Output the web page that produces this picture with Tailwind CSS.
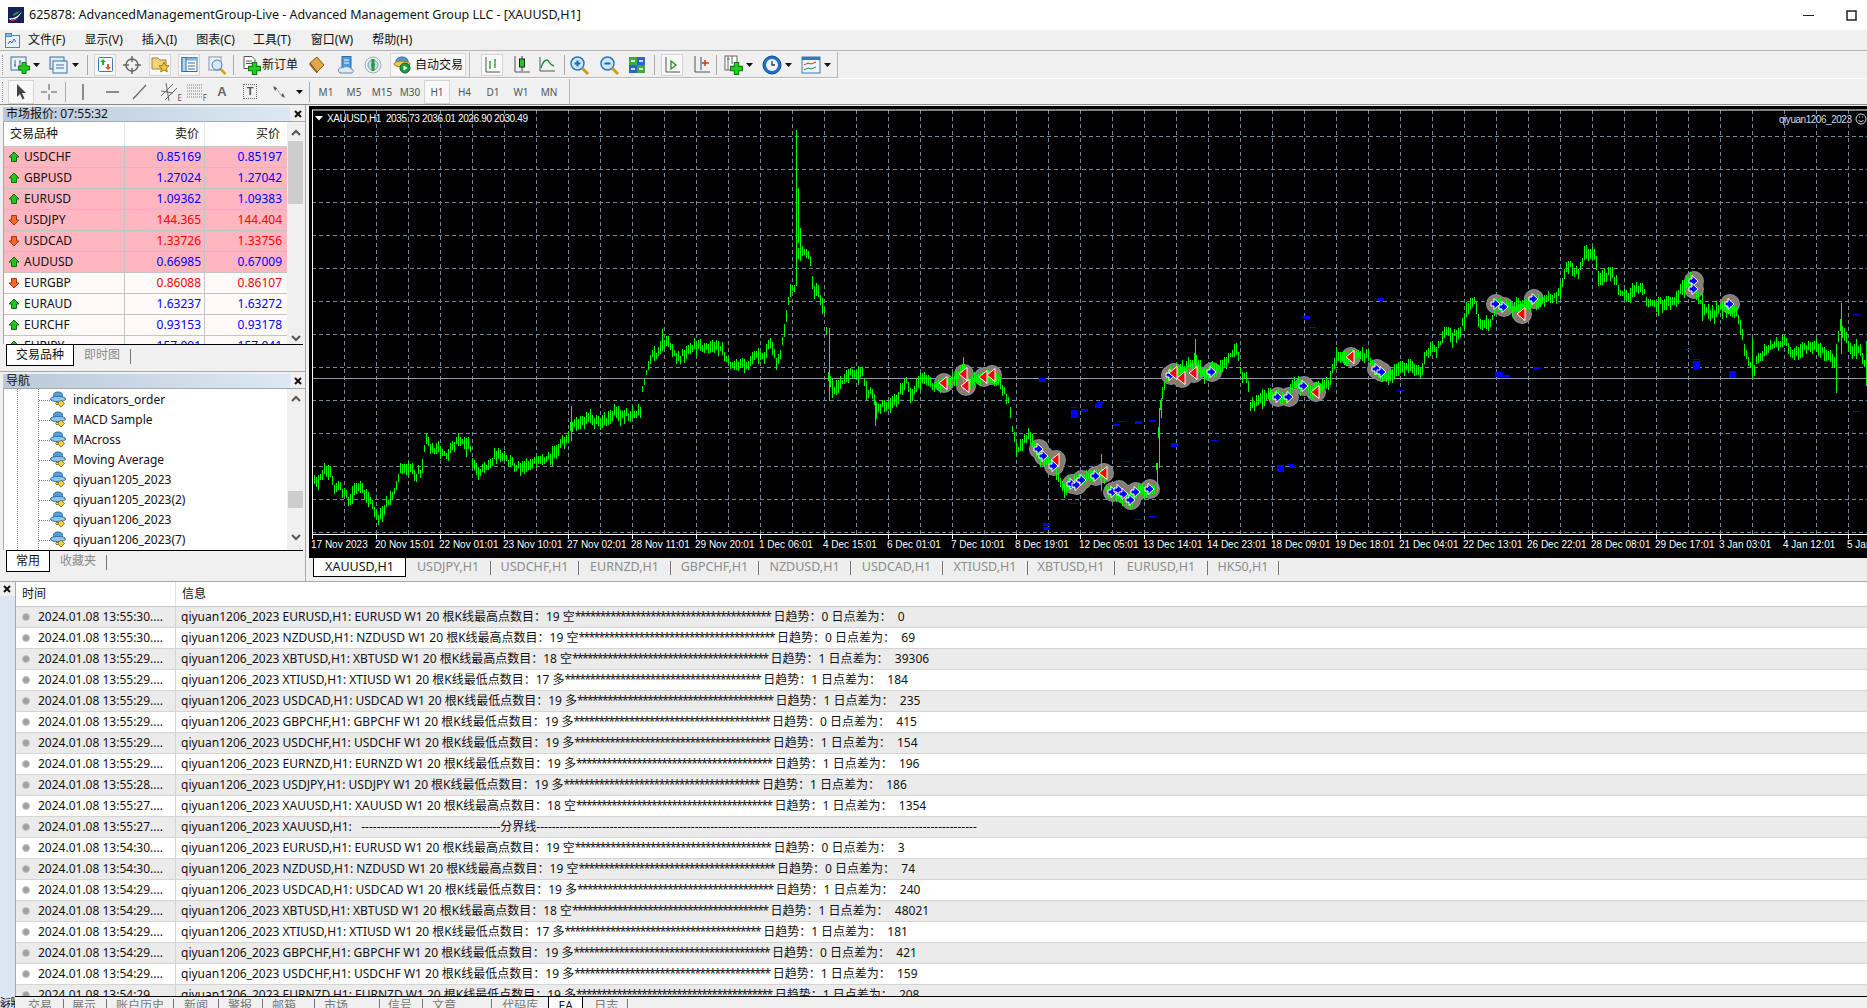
<!DOCTYPE html>
<html lang="zh-CN">
<head>
<meta charset="utf-8"/>
<title>625878: AdvancedManagementGroup-Live</title>
<script src="https://cdn.jsdelivr.net/npm/@tailwindcss/browser@4"></script>
</head>
<body class="m-0 overflow-hidden bg-white">

<!-- shared icons -->
<svg class="absolute w-0 h-0">
  <symbol id="dd" viewBox="0 0 10 10"><path d="M1 3h7L4.500 7z" fill="#111"/></symbol>
  <symbol id="plus" viewBox="0 0 12 12"><path d="M4 .5h4v3.500h3.500v4H8v3.500H4V8H.5V4H4z" fill="#1fd01f" stroke="#0c7a0c"/></symbol>
  <symbol id="hat" viewBox="0 0 18 18">
    <ellipse cx="8" cy="4.500" rx="4.500" ry="3.500" fill="#5aa0d8" stroke="#2c6ea8"/>
    <ellipse cx="8" cy="8" rx="7.500" ry="2.700" fill="#8cc4ec" stroke="#2c6ea8"/>
    <path d="M11 9l3.500 3.500L11 16l-3.500-3.500z" fill="#f3d24a" stroke="#8b7a20"/>
    <path d="M7 11l1.500 1.500L7 14l-1.500-1.500z" fill="#f3d24a" stroke="#8b7a20"/>
  </symbol>
  <symbol id="up" viewBox="0 0 12 12"><path d="M6 1l5 5H8.500v4.500h-5V6H1z" fill="#1fc41f" stroke="#0d6d0d"/></symbol>
  <symbol id="down" viewBox="0 0 12 12"><path d="M6 11L1 6h2.500V1.500h5V6H11z" fill="#f4682c" stroke="#9c3a10"/></symbol>
  <symbol id="chevup" viewBox="0 0 10 8"><path d="M1 6l4-4 4 4" fill="none" stroke="#555" stroke-width="2"/></symbol>
  <symbol id="chevdown" viewBox="0 0 10 8"><path d="M1 2l4 4 4-4" fill="none" stroke="#555" stroke-width="2"/></symbol>
  <symbol id="close" viewBox="0 0 8 8"><path d="M1 1l6 6M7 1L1 7" fill="none" stroke="#111" stroke-width="2"/></symbol>
</svg>

<div class="w-[1867px] h-[1008px] flex flex-col overflow-hidden text-[12px] leading-none text-[#111] font-['Noto_Sans','Noto_Sans_CJK_SC',sans-serif]">

  <!-- title bar -->
  <div class="h-[30px] flex items-center bg-white shrink-0">
    <svg class="ml-[8px] w-[16px] h-[16px]" viewBox="0 0 16 16"><rect width="16" height="16" fill="#16205a"/><path d="M1 11c4 1 9-1 13-7-2 5-6 9-12 9z" fill="#fff"/><path d="M4 9c2-3 5-4 8-5-2 2-4 4-8 5z" fill="#27b34a"/><path d="M3 12c3 1 6 0 8-2-2 3-5 4-8 4z" fill="#e23a3a"/></svg>
    <span class="ml-[5px] text-[12.500px] whitespace-pre">625878: AdvancedManagementGroup-Live - Advanced Management Group LLC - [XAUUSD,H1]</span>
    <svg class="ml-auto w-[11px] h-[11px]" viewBox="0 0 11 11"><path d="M0 5.500h11" stroke="#222"/></svg>
    <svg class="ml-[32px] mr-[10px] w-[11px] h-[11px]" viewBox="0 0 11 11"><rect x="1" y="1" width="9" height="9" fill="none" stroke="#222" stroke-width="1.500"/></svg>
  </div>

  <!-- menu -->
  <div class="h-[20px] flex items-center bg-[#f0f0f0] border-b border-[#b4b4b4] shrink-0 box-content">
    <svg class="ml-[5px] w-[15px] h-[15px]" viewBox="0 0 15 15"><rect x=".5" y="2.500" width="14" height="12" fill="#e8f1fa" stroke="#4a86c0"/><rect x=".5" y=".5" width="6" height="3" fill="#8ab8e0" stroke="#4a86c0"/><path d="M3 11l2-3 2 2 2-4 2 3" fill="none" stroke="#3a6ea5"/></svg>
    <span class="ml-[8px]">文件(F)</span>
    <span class="ml-[19px]">显示(V)</span>
    <span class="ml-[19px]">插入(I)</span>
    <span class="ml-[19px]">图表(C)</span>
    <span class="ml-[18px]">工具(T)</span>
    <span class="ml-[20px]">窗口(W)</span>
    <span class="ml-[19px]">帮助(H)</span>
  </div>

  <!-- main toolbar -->
  <div class="h-[27px] flex items-end bg-[#f0f0f0] shrink-0">
    <div class="h-[26px] flex items-center border-b border-r border-[#b8b8b8] w-[470px] shrink-0">
      <i class="ml-[2px] mr-[5px] h-[20px] border-l border-dotted border-[#999]"></i>
      <svg class="w-[24px] h-[20px]" viewBox="0 0 24 20"><rect x="3" y="2" width="15" height="13" fill="#eaf3fb" stroke="#3f6f9f"/><path d="M7 5v7M6 10h2M12 5v7M11 7h2" stroke="#3f6f9f"/><use href="#plus" x="10" y="7" width="12" height="12"/></svg>
      <svg class="w-[10px] h-[10px]"><use href="#dd"/></svg>
      <svg class="ml-[4px] w-[24px] h-[20px]" viewBox="0 0 24 20"><rect x="4" y="2" width="14" height="12" fill="#dce9f6" stroke="#3f6f9f"/><rect x="7" y="6" width="14" height="12" fill="#eaf3fb" stroke="#3f6f9f"/><path d="M10 10h8M10 13h8" stroke="#3f6f9f"/></svg>
      <svg class="ml-[1px] w-[10px] h-[10px]"><use href="#dd"/></svg>
      <i class="ml-[6px] w-px h-[20px] bg-[#a8a8a8]"></i>
      <span class="ml-[6px] w-[22px] h-[22px] flex items-center justify-center border border-[#d4d4d4] bg-[#f8f8f8]"><svg class="w-[17px] h-[17px]" viewBox="0 0 17 17"><rect x="1.500" y="1.500" width="14" height="14" rx="1" fill="#fff" stroke="#3a7ab8"/><path d="M6 3l3 3H7v3H5V6H3z" fill="#22b022"/><path d="M11 14l-3-3h2V8h2v3h2z" fill="#e8502a"/></svg></span>
      <svg class="ml-[4px] w-[24px] h-[20px]" viewBox="0 0 24 20"><circle cx="12" cy="10" r="6" fill="none" stroke="#666" stroke-width="1.500"/><path d="M12 1v6M12 13v6M3 10h6M15 10h6" stroke="#666" stroke-width="1.500"/></svg>
      <span class="ml-[5px] w-[22px] h-[22px] flex items-center justify-center border border-[#d4d4d4] bg-[#f8f8f8]"><svg class="w-[19px] h-[19px]" viewBox="0 0 19 19"><path d="M1 3h6l2 2h6v9H1z" fill="#f2d578" stroke="#a08530"/><path d="M13 7l1.600 3.500 3.400.4-2.500 2.300.7 3.600-3.200-1.800-3.200 1.800.7-3.600L8 10.900l3.400-.4z" fill="#f6c630" stroke="#a07a10"/></svg></span>
      <span class="ml-[7px] w-[22px] h-[22px] flex items-center justify-center border border-[#d4d4d4] bg-[#f8f8f8]"><svg class="w-[17px] h-[17px]" viewBox="0 0 17 17"><rect x="1" y="1.500" width="15" height="14" fill="#fff" stroke="#2e6da8"/><rect x="1" y="1.500" width="15" height="3" fill="#7fb0dc"/><rect x="1" y="1.500" width="4" height="14" fill="#bcd6ee" stroke="#2e6da8"/><path d="M7 7h7M7 10h7M7 13h7" stroke="#2e6da8"/></svg></span>
      <svg class="ml-[6px] w-[22px] h-[22px]" viewBox="0 0 22 22"><rect x="3" y="3" width="12" height="13" fill="#f4f8fc" stroke="#7a90a8"/><circle cx="11" cy="11" r="5" fill="#d6e8f6" stroke="#3f7ab0"/><path d="M14.500 15l5 5" stroke="#d0a020" stroke-width="2.500"/></svg>
      <i class="ml-[5px] w-px h-[20px] bg-[#a8a8a8]"></i>
      <svg class="ml-[7px] w-[20px] h-[20px]" viewBox="0 0 20 20"><path d="M3 1.500h8l3 3v9H3z" fill="#fff" stroke="#555"/><path d="M5 6h6M5 8.500h6" stroke="#555"/><use href="#plus" x="7" y="7" width="13" height="13"/></svg>
      <span class="ml-px w-[36px] whitespace-nowrap">新订单</span>
      <svg class="ml-[8px] w-[22px] h-[20px]" viewBox="0 0 22 20"><path d="M4 8l7-6 7 8-7 7z" fill="#e0a848" stroke="#8a5c18"/><path d="M4 8l7 9v1L4 10z" fill="#a87420" stroke="#8a5c18"/></svg>
      <svg class="ml-[7px] w-[22px] h-[20px]" viewBox="0 0 22 20"><rect x="7" y="1.500" width="9" height="11" fill="#4a9ae0" stroke="#2a6ca8"/><path d="M9 5h5M9 8h5" stroke="#fff"/><path d="M4 17c-2-3 1-5 3-4 2-2 8-2 9 1 3 0 3 4 0 4H5z" fill="#dde8f2" stroke="#6a86a0"/></svg>
      <svg class="ml-[5px] w-[22px] h-[20px]" viewBox="0 0 22 20"><circle cx="11" cy="10" r="8" fill="#e8eef2" stroke="#9ab0bc"/><circle cx="11" cy="10" r="5" fill="#c6dce6" stroke="#7ea0b0"/><path d="M11 4v12" stroke="#2c9a48" stroke-width="3"/><circle cx="11" cy="10" r="2" fill="#2c9a48"/></svg>
      <span class="ml-[6px] w-[76px] h-[24px] flex items-center border border-[#d8d8d8] bg-[#f8f8f8]">
        <svg class="ml-[2px] w-[20px] h-[20px]" viewBox="0 0 20 20"><ellipse cx="9" cy="6" rx="6" ry="4" fill="#4f9ad8" stroke="#2a6ca8"/><ellipse cx="9" cy="9" rx="8" ry="3" fill="#f2c84a" stroke="#9a7a18"/><circle cx="12" cy="13" r="5" fill="#1c9c3c" stroke="#0c6a24"/><path d="M10.500 10.500l4 2.500-4 2.500z" fill="#fff"/></svg>
        <span class="ml-[2px] whitespace-nowrap">自动交易</span>
      </span>
    </div>
    <div class="h-[26px] flex items-center border-b border-r border-[#b8b8b8] w-[368px] shrink-0 pl-[11px]">
      <span class="w-[22px] h-[22px] flex items-center justify-center border border-[#d4d4d4] bg-[#f8f8f8]"><svg class="w-[18px] h-[18px]" viewBox="0 0 18 18"><path d="M3 1v15h14" fill="none" stroke="#555"/><path d="M7 5v8M6 11h1M7 6h1M12 3v9M11 9h1M12 4h1" stroke="#1a9a1a" stroke-width="1.200"/></svg></span>
      <svg class="ml-[7px] w-[22px] h-[22px]" viewBox="0 0 22 22"><path d="M5 2v16h15" fill="none" stroke="#555"/><path d="M12 2v15" stroke="#333"/><rect x="9.500" y="5" width="5" height="8" fill="#2cc02c" stroke="#222"/></svg>
      <svg class="ml-[4px] w-[22px] h-[22px]" viewBox="0 0 22 22"><path d="M4 3v14h15" fill="none" stroke="#555"/><path d="M5 14c2-7 4-8 6-8s2 5 7 6" fill="none" stroke="#1a8a3a" stroke-width="1.300"/></svg>
      <i class="ml-[6px] w-px h-[20px] bg-[#a8a8a8]"></i>
      <svg class="ml-[3px] w-[22px] h-[22px]" viewBox="0 0 22 22"><circle cx="9.500" cy="9.500" r="6.500" fill="#cfe6f8" stroke="#2a78b8" stroke-width="1.500"/><path d="M6.500 9.500h6M9.500 6.500v6" stroke="#1a6aa8" stroke-width="2"/><path d="M14 14l6 6" stroke="#d09a20" stroke-width="3"/></svg>
      <svg class="ml-[8px] w-[22px] h-[22px]" viewBox="0 0 22 22"><circle cx="9.500" cy="9.500" r="6.500" fill="#cfe6f8" stroke="#2a78b8" stroke-width="1.500"/><path d="M6.500 9.500h6" stroke="#1a6aa8" stroke-width="2"/><path d="M14 14l6 6" stroke="#d09a20" stroke-width="3"/></svg>
      <svg class="ml-[6px] w-[22px] h-[22px]" viewBox="0 0 22 22"><rect x="3" y="3" width="8" height="8" fill="#3fa83f"/><rect x="11" y="3" width="8" height="8" fill="#2f62c8"/><rect x="3" y="11" width="8" height="8" fill="#2f62c8"/><rect x="11" y="11" width="8" height="8" fill="#3fa83f"/><path d="M5 7h4M13 7h4M5 15h4M13 15h4" stroke="#fff" stroke-width="1.500"/></svg>
      <i class="ml-[6px] w-px h-[20px] bg-[#a8a8a8]"></i>
      <span class="ml-[6px] w-[22px] h-[22px] flex items-center justify-center border border-[#d4d4d4] bg-[#f8f8f8]"><svg class="w-[18px] h-[18px]" viewBox="0 0 18 18"><path d="M3 1v15h14" fill="none" stroke="#555"/><path d="M8 5l5 4-5 4z" fill="none" stroke="#1a9a1a" stroke-width="1.300"/></svg></span>
      <svg class="ml-[6px] w-[22px] h-[22px]" viewBox="0 0 22 22"><path d="M6 2v16h15" fill="none" stroke="#555"/><path d="M12 3v13" stroke="#2a4a8a"/><path d="M13 9h7M16 6v6" stroke="#c83a10" stroke-width="1.500"/></svg>
      <i class="ml-[5px] w-px h-[20px] bg-[#a8a8a8]"></i>
      <svg class="ml-[5px] w-[22px] h-[22px]" viewBox="0 0 22 22"><rect x="3" y="2" width="12" height="14" fill="#fff" stroke="#666"/><path d="M6 2v14M5 5h3M10 2v8" stroke="#666"/><use href="#plus" x="8" y="8" width="13" height="13"/></svg>
      <svg class="ml-px w-[10px] h-[10px]"><use href="#dd"/></svg>
      <svg class="ml-[6px] w-[22px] h-[22px]" viewBox="0 0 22 22"><circle cx="11" cy="11" r="9" fill="#1c72c8" stroke="#0e4a90"/><circle cx="11" cy="11" r="6" fill="#eef4fa"/><path d="M11 7v4h3" fill="none" stroke="#333" stroke-width="1.300"/></svg>
      <svg class="ml-px w-[10px] h-[10px]"><use href="#dd"/></svg>
      <svg class="ml-[6px] w-[22px] h-[22px]" viewBox="0 0 22 22"><rect x="2" y="3" width="18" height="16" fill="#eef4fa" stroke="#3a78b0"/><rect x="2" y="3" width="18" height="3" fill="#3a78b0"/><path d="M4 11l4-2 3 1 5-2" fill="none" stroke="#c03a1a"/><path d="M4 16l4-2 3 1 5-2" fill="none" stroke="#1a9a3a"/></svg>
      <svg class="ml-px w-[10px] h-[10px]"><use href="#dd"/></svg>
    </div>
  </div>

  <!-- drawing and period toolbar -->
  <div class="h-[26px] mt-px flex items-center bg-[#f0f0f0] border-b border-[#8a8a8a] shrink-0">
    <div class="h-[25px] flex items-center w-[570px] shrink-0 border-r border-[#b8b8b8] text-[#555]">
      <i class="ml-[2px] mr-[5px] h-[20px] border-l border-dotted border-[#999]"></i>
      <span class="w-[26px] h-[24px] flex items-center justify-center border border-[#d4d4d4] bg-[#f8f8f8]"><svg class="w-[14px] h-[18px]" viewBox="0 0 14 18"><path d="M3 1v13l3-3 2.500 5.500 2-1L8 10h4z" fill="#444"/></svg></span>
      <svg class="ml-[2px] w-[26px] h-[20px]" viewBox="0 0 26 20"><path d="M13 2v6M13 12v6M5 10h6M15 10h6" stroke="#555"/></svg>
      <i class="ml-[3px] w-px h-[20px] bg-[#a8a8a8]"></i>
      <svg class="ml-[4px] w-[26px] h-[20px]" viewBox="0 0 26 20"><path d="M13 2v16" stroke="#555" stroke-width="1.300"/></svg>
      <svg class="ml-[3px] w-[26px] h-[20px]" viewBox="0 0 26 20"><path d="M7 10h13" stroke="#555" stroke-width="1.300"/></svg>
      <svg class="ml-px w-[26px] h-[20px]" viewBox="0 0 26 20"><path d="M7 17L20 3" stroke="#666" stroke-width="1.200"/></svg>
      <span class="ml-[4px] relative w-[26px] h-[20px]"><svg class="w-[26px] h-[20px]" viewBox="0 0 26 20"><path d="M5 14L17 2M9 18L21 6M10 1l3 18M5 9l12 2" stroke="#666"/></svg><b class="absolute right-0 bottom-0 text-[8px] font-normal">E</b></span>
      <span class="relative w-[26px] h-[20px]"><svg class="w-[26px] h-[20px]" viewBox="0 0 26 20"><path d="M5 3h15M5 6h15M5 9h15M5 12h15M5 15h15" stroke="#777" stroke-dasharray="1 1"/></svg><b class="absolute right-[1px] bottom-0 text-[8px] font-normal">F</b></span>
      <span class="ml-[1px] w-[26px] text-center text-[13px] text-[#666] font-['Liberation_Sans',sans-serif] font-bold">A</span>
      <span class="ml-[2px] w-[26px] flex justify-center"><span class="w-[14px] h-[15px] flex items-center justify-center border border-dotted border-[#666] text-[11px] text-[#555] font-['Liberation_Sans',sans-serif] font-bold">T</span></span>
      <svg class="ml-[3px] w-[26px] h-[20px]" viewBox="0 0 26 20"><path d="M7 4l4 2-2 3zM19 16l-4-2 2-3z" fill="#555"/><path d="M10 6l5 7" stroke="#555" stroke-dasharray="1 1"/></svg>
      <svg class="ml-[3px] w-[10px] h-[10px]"><use href="#dd"/></svg>
      <i class="ml-[4px] w-px h-[20px] bg-[#a8a8a8]"></i>
      <div class="ml-[2px] flex items-center text-[10px] text-[#555]">
        <span class="w-[28px] text-center">M1</span>
        <span class="w-[28px] text-center">M5</span>
        <span class="w-[28px] text-center">M15</span>
        <span class="w-[28px] text-center">M30</span>
        <span class="w-[26px] h-[24px] flex items-center justify-center border border-[#d4d4d4] bg-[#f8f8f8]">H1</span>
        <span class="w-[29px] text-center">H4</span>
        <span class="w-[28px] text-center">D1</span>
        <span class="w-[28px] text-center">W1</span>
        <span class="w-[28px] text-center">MN</span>
      </div>
    </div>
  </div>

  <!-- workspace -->
  <div class="h-[476px] flex shrink-0 bg-[#f0f0f0]">
    <div class="w-[306px] shrink-0 flex flex-col border-r border-[#a8a8a8]">

      <!-- market watch -->
      <div class="h-[266px] pt-[2px] pl-[3px] flex flex-col shrink-0">
        <div class="h-[14px] flex items-center shrink-0">
          <div class="w-[287px] h-[14px] flex items-center pl-[3px] text-[12px] bg-gradient-to-r from-[#b9c9da] to-[#dce8f4]">市场报价: 07:55:32</div>
          <svg class="ml-[4px] w-[8px] h-[8px]"><use href="#close"/></svg>
        </div>
        <div class="h-[223px] flex border-t border-l border-[#a8a8a8] overflow-hidden shrink-0">
          <div class="w-[283px] shrink-0 bg-white">
            <div class="h-[25px] flex items-center border-b border-[#c8c8c8]">
              <span class="w-[121px] pl-[6px] h-full flex items-center border-r border-[#e4e4e4]">交易品种</span>
              <span class="w-[80px] pr-[5px] h-full flex items-center justify-end border-r border-[#e4e4e4]">卖价</span>
              <span class="w-[80px] pr-[5px] h-full flex items-center justify-end">买价</span>
            </div>
            <div id="quotes"></div>
          </div>
          <div class="w-[17px] shrink-0 flex flex-col items-center bg-[#f0f0f0]">
            <svg class="mt-[7px] w-[10px] h-[8px]"><use href="#chevup"/></svg>
            <div class="mt-[4px] w-[15px] h-[63px] bg-[#cdcdcd]"></div>
            <svg class="mt-[130px] w-[10px] h-[8px]"><use href="#chevdown"/></svg>
          </div>
        </div>
        <div class="h-[22px] flex items-start border-t border-black ml-[3px] mr-[2px] shrink-0">
          <span class="w-[68px] h-[21px] bg-white border-x border-b border-black flex items-center justify-center">交易品种</span>
          <span class="ml-[10px] text-[#8c8c8c] h-[20px] flex items-center">即时图</span>
          <i class="ml-[10px] mt-[4px] w-px h-[15px] bg-[#777]"></i>
        </div>
      </div>

      <div class="h-[3px] border-t border-[#a8a8a8] shrink-0"></div>

      <!-- navigator -->
      <div class="pl-[3px] flex flex-col">
        <div class="h-[14px] flex items-center shrink-0">
          <div class="w-[287px] h-[14px] flex items-center pl-[3px] bg-gradient-to-r from-[#b9c9da] to-[#dce8f4]">导航</div>
          <svg class="ml-[4px] w-[8px] h-[8px]"><use href="#close"/></svg>
        </div>
        <div class="h-[162px] flex border-t border-l border-[#a8a8a8] overflow-hidden shrink-0">
          <div class="relative w-[283px] shrink-0 bg-white pt-px">
            <i class="absolute left-[13px] top-0 h-full border-l border-dotted border-[#777]"></i>
            <i class="absolute left-[34px] top-0 h-full border-l border-dotted border-[#777]"></i>
            <div class="h-[20px] flex items-center pl-[35px]"><i class="w-[11px] border-t border-dotted border-[#777]"></i><svg class="w-[18px] h-[18px]"><use href="#hat"/></svg><span class="ml-[5px]">indicators_order</span></div>
            <div class="h-[20px] flex items-center pl-[35px]"><i class="w-[11px] border-t border-dotted border-[#777]"></i><svg class="w-[18px] h-[18px]"><use href="#hat"/></svg><span class="ml-[5px]">MACD Sample</span></div>
            <div class="h-[20px] flex items-center pl-[35px]"><i class="w-[11px] border-t border-dotted border-[#777]"></i><svg class="w-[18px] h-[18px]"><use href="#hat"/></svg><span class="ml-[5px]">MAcross</span></div>
            <div class="h-[20px] flex items-center pl-[35px]"><i class="w-[11px] border-t border-dotted border-[#777]"></i><svg class="w-[18px] h-[18px]"><use href="#hat"/></svg><span class="ml-[5px]">Moving Average</span></div>
            <div class="h-[20px] flex items-center pl-[35px]"><i class="w-[11px] border-t border-dotted border-[#777]"></i><svg class="w-[18px] h-[18px]"><use href="#hat"/></svg><span class="ml-[5px]">qiyuan1205_2023</span></div>
            <div class="h-[20px] flex items-center pl-[35px]"><i class="w-[11px] border-t border-dotted border-[#777]"></i><svg class="w-[18px] h-[18px]"><use href="#hat"/></svg><span class="ml-[5px]">qiyuan1205_2023(2)</span></div>
            <div class="h-[20px] flex items-center pl-[35px]"><i class="w-[11px] border-t border-dotted border-[#777]"></i><svg class="w-[18px] h-[18px]"><use href="#hat"/></svg><span class="ml-[5px]">qiyuan1206_2023</span></div>
            <div class="h-[20px] flex items-center pl-[35px]"><i class="w-[11px] border-t border-dotted border-[#777]"></i><svg class="w-[18px] h-[18px]"><use href="#hat"/></svg><span class="ml-[5px]">qiyuan1206_2023(7)</span></div>
          </div>
          <div class="w-[17px] shrink-0 flex flex-col items-center bg-[#f0f0f0]">
            <svg class="mt-[6px] w-[10px] h-[8px]"><use href="#chevup"/></svg>
            <div class="mt-[88px] w-[15px] h-[17px] bg-[#cdcdcd]"></div>
            <svg class="mt-[25px] w-[10px] h-[8px]"><use href="#chevdown"/></svg>
          </div>
        </div>
        <div class="h-[23px] flex items-start border-t border-black ml-[3px] mr-[2px] shrink-0">
          <span class="w-[44px] h-[21px] bg-white border-x border-b border-black flex items-center justify-center">常用</span>
          <span class="ml-[10px] text-[#8c8c8c] h-[20px] flex items-center">收藏夹</span>
          <i class="ml-[10px] mt-[4px] w-px h-[15px] bg-[#777]"></i>
        </div>
      </div>
    </div>

    <!-- chart and its window tabs -->
    <div class="flex-1 min-w-0 pl-[3px] pt-[1px] flex flex-col">
      <div class="h-[451px] bg-black shrink-0 overflow-hidden">
        <svg id="chart" class="block w-[1558px] h-[451px] text-[10px] font-['Liberation_Sans_Narrow','Liberation_Sans',sans-serif]" viewBox="309 105 1558 451"></svg>
      </div>
      <div class="h-[23px] flex items-start text-[12.500px] text-[#8c8c8c] bg-[#eeeeee] border-t border-black shrink-0">
        <span class="ml-[4px] w-[93px] h-[19px] bg-white text-[#111] border-x border-b border-black flex items-center justify-center">XAUUSD,H1</span>
        <span class="w-[84px] h-[19px] flex items-center justify-center">USDJPY,H1</span><i class="mt-[3px] w-px h-[14px] bg-[#777]"></i>
        <span class="w-[87px] h-[19px] flex items-center justify-center">USDCHF,H1</span><i class="mt-[3px] w-px h-[14px] bg-[#777]"></i>
        <span class="w-[91px] h-[19px] flex items-center justify-center">EURNZD,H1</span><i class="mt-[3px] w-px h-[14px] bg-[#777]"></i>
        <span class="w-[87px] h-[19px] flex items-center justify-center">GBPCHF,H1</span><i class="mt-[3px] w-px h-[14px] bg-[#777]"></i>
        <span class="w-[91px] h-[19px] flex items-center justify-center">NZDUSD,H1</span><i class="mt-[3px] w-px h-[14px] bg-[#777]"></i>
        <span class="w-[91px] h-[19px] flex items-center justify-center">USDCAD,H1</span><i class="mt-[3px] w-px h-[14px] bg-[#777]"></i>
        <span class="w-[84px] h-[19px] flex items-center justify-center">XTIUSD,H1</span><i class="mt-[3px] w-px h-[14px] bg-[#777]"></i>
        <span class="w-[86px] h-[19px] flex items-center justify-center">XBTUSD,H1</span><i class="mt-[3px] w-px h-[14px] bg-[#777]"></i>
        <span class="w-[92px] h-[19px] flex items-center justify-center">EURUSD,H1</span><i class="mt-[3px] w-px h-[14px] bg-[#777]"></i>
        <span class="w-[70px] h-[19px] flex items-center justify-center">HK50,H1</span><i class="mt-[3px] w-px h-[14px] bg-[#777]"></i>
      </div>
    </div>
  </div>

  <!-- terminal -->
  <div class="flex-1 min-h-0 flex border-t border-[#a8a8a8] bg-white">
    <div class="w-[15px] shrink-0 flex flex-col bg-[#f0f0f0]">
      <svg class="ml-[3px] mt-[3px] w-[8px] h-[8px]"><use href="#close"/></svg>
      <div class="mt-[3px] flex-1 bg-[#dbe6f2] pt-[398px] overflow-hidden"><span class="block [writing-mode:vertical-rl] rotate-180 text-[11px]">终端</span></div>
    </div>
    <div class="flex-1 min-w-0 flex flex-col">
      <div class="h-[25px] flex items-center border-b border-[#c8c8c8] border-l border-l-[#a8a8a8] shrink-0">
        <span class="w-[160px] pl-[6px] h-full flex items-center border-r border-[#e4e4e4]">时间</span>
        <span class="pl-[6px]">信息</span>
      </div>
      <div id="log" class="h-[389px] overflow-hidden border-l border-[#a8a8a8] shrink-0"></div>
      <div class="h-[21px] flex items-start border-t border-black bg-[#f0f0f0] text-[#777] shrink-0">
        <span class="ml-[13px] h-[18px] flex items-center">交易</span><i class="ml-[11px] mt-[2px] w-px h-[14px] bg-[#777]"></i>
        <span class="ml-[8px] h-[18px] flex items-center">展示</span><i class="ml-[10px] mt-[2px] w-px h-[14px] bg-[#777]"></i>
        <span class="ml-[9px] h-[18px] flex items-center">账户历史</span><i class="ml-[9px] mt-[2px] w-px h-[14px] bg-[#777]"></i>
        <span class="ml-[10px] h-[18px] flex items-center">新闻</span><i class="ml-[10px] mt-[2px] w-px h-[14px] bg-[#777]"></i>
        <span class="ml-[9px] h-[18px] flex items-center">警报</span><i class="ml-[10px] mt-[2px] w-px h-[14px] bg-[#777]"></i>
        <span class="ml-[9px] h-[18px] flex items-center">邮箱</span><i class="ml-[18px] mt-[2px] w-px h-[14px] bg-[#777]"></i>
        <span class="ml-[9px] h-[18px] flex items-center">市场</span><i class="ml-[31px] mt-[2px] w-px h-[14px] bg-[#777]"></i>
        <span class="ml-[8px] h-[18px] flex items-center">信号</span><i class="ml-[10px] mt-[2px] w-px h-[14px] bg-[#777]"></i>
        <span class="ml-[9px] h-[18px] flex items-center">文章</span><i class="ml-[35px] mt-[2px] w-px h-[14px] bg-[#777]"></i>
        <span class="ml-[10px] h-[18px] flex items-center">代码库</span>
        <span class="ml-[10px] w-[35px] h-[18px] bg-white text-[#111] border-x border-black flex items-center justify-center">EA</span>
        <span class="ml-[11px] h-[18px] flex items-center">日志</span><i class="ml-[9px] mt-[2px] w-px h-[14px] bg-[#777]"></i>
      </div>
    </div>
  </div>
</div>

<script>
  // quotes
  var quotes = [
    ['USDCHF', 'up', '0.85169', '0.85197', 1], ['GBPUSD', 'up', '1.27024', '1.27042', 1],
    ['EURUSD', 'up', '1.09362', '1.09383', 1], ['USDJPY', 'down', '144.365', '144.404', 1],
    ['USDCAD', 'down', '1.33726', '1.33756', 1], ['AUDUSD', 'up', '0.66985', '0.67009', 1],
    ['EURGBP', 'down', '0.86088', '0.86107', 0], ['EURAUD', 'up', '1.63237', '1.63272', 0],
    ['EURCHF', 'up', '0.93153', '0.93178', 0], ['EURJPY', 'up', '157.001', '157.041', 0]
  ];
  document.getElementById('quotes').innerHTML = quotes.map(function (q) {
    var bg = q[4] ? 'bg-[#ffb6c1]' : 'bg-[#fffafa]';
    var col = q[1] === 'up' ? 'text-[#0000ff]' : 'text-[#ff0000]';
    return '<div class="h-[21px] flex items-center border-b border-[#c4c4c4] ' + bg + '">' +
      '<span class="w-[121px] h-full flex items-center border-r border-[#c4c4c4]"><svg class="ml-[4px] w-[12px] h-[12px]"><use href="#' + q[1] + '"/></svg><span class="ml-[4px]">' + q[0] + '</span></span>' +
      '<span class="w-[80px] h-full flex items-center justify-end pr-[3px] border-r border-[#c4c4c4] ' + col + '">' + q[2] + '</span>' +
      '<span class="w-[80px] h-full flex items-center justify-end pr-[3px] ' + col + '">' + q[3] + '</span></div>';
  }).join('');

  // experts log
  var logRows = [
    ['13:55:30', 'EURUSD', '高', 19, '空', 0, 0], ['13:55:30', 'NZDUSD', '高', 19, '空', 0, 69],
    ['13:55:29', 'XBTUSD', '高', 18, '空', 1, 39306], ['13:55:29', 'XTIUSD', '低', 17, '多', 1, 184],
    ['13:55:29', 'USDCAD', '低', 19, '多', 1, 235], ['13:55:29', 'GBPCHF', '低', 19, '多', 0, 415],
    ['13:55:29', 'USDCHF', '低', 19, '多', 1, 154], ['13:55:29', 'EURNZD', '低', 19, '多', 1, 196],
    ['13:55:28', 'USDJPY', '低', 19, '多', 1, 186], ['13:55:27', 'XAUUSD', '高', 18, '空', 1, 1354],
    ['13:55:27', null],
    ['13:54:30', 'EURUSD', '高', 19, '空', 0, 3], ['13:54:30', 'NZDUSD', '高', 19, '空', 0, 74],
    ['13:54:29', 'USDCAD', '低', 19, '多', 1, 240], ['13:54:29', 'XBTUSD', '高', 18, '空', 1, 48021],
    ['13:54:29', 'XTIUSD', '低', 17, '多', 1, 181], ['13:54:29', 'GBPCHF', '低', 19, '多', 0, 421],
    ['13:54:29', 'USDCHF', '低', 19, '多', 1, 159], ['13:54:29', 'EURNZD', '低', 19, '多', 1, 208]
  ];
  var stars = new Array(40).join('*');
  document.getElementById('log').innerHTML = logRows.map(function (r, i) {
    var msg;
    if (r[1]) {
      msg = 'qiyuan1206_2023 ' + r[1] + ',H1: ' + r[1] + ' W1 20 根K线最' + r[2] + '点数目：' + r[3] + ' ' + r[4] +
        '<span class="tracking-[-1.600px]">' + stars + '</span> 日趋势：' + r[5] + ' 日点差为：  ' + r[6];
    } else {
      msg = 'qiyuan1206_2023 XAUUSD,H1:   ' + new Array(37).join('-') + '分界线' + new Array(115).join('-');
    }
    return '<div class="h-[21px] flex items-center border-b border-[#d4d4d4] ' + (i % 2 ? 'bg-white' : 'bg-[#ebebeb]') + '">' +
      '<span class="w-[160px] shrink-0 h-full flex items-center border-r border-[#d4d4d4]"><i class="ml-[6px] w-[8px] h-[8px] rounded-full bg-[#a0a0a0] border border-[#c4c4c4]"></i><span class="ml-[8px]">2024.01.08 ' + r[0] + '....</span></span>' +
      '<span class="pl-[5px] whitespace-pre">' + msg + '</span></div>';
  }).join('');

  // chart: price path traced from the picture, bars filled in with a fixed seed
  var path = [[312,477],[318,482],[323,467],[330,470],[333,485],[343,490],[349,500],[353,488],[360,487],[368,495],[373,510],[378,515],[387,500],[393,495],[400,467],[410,465],[415,475],[422,468],[425,438],[432,448],[447,453],[457,440],[470,445],[473,465],[478,470],[490,463],[495,455],[503,455],[508,462],[520,465],[530,461],[543,462],[553,453],[558,445],[568,438],[571,422],[577,425],[582,422],[587,415],[600,422],[613,412],[630,413],[640,413],[642,388],[647,368],[650,355],[658,353],[662,337],[670,345],[678,358],[690,348],[697,342],[703,347],[720,345],[727,360],[735,365],[740,362],[747,367],[753,353],[763,355],[770,342],[777,365],[783,338],[787,305],[790,288],[795,285],[800,232],[803,252],[808,252],[811,265],[813,292],[817,288],[825,310],[827,350],[828,377],[835,390],[843,380],[850,370],[855,373],[862,370],[865,387],[872,393],[875,407],[880,405],[888,403],[898,397],[905,377],[912,393],[918,380],[927,378],[933,387],[943,382],[953,378],[963,370],[970,383],[977,378],[990,377],[1000,382],[1008,400],[1012,427],[1017,447],[1022,442],[1028,433],[1035,447],[1047,460],[1053,463],[1058,477],[1063,490],[1073,480],[1083,477],[1095,475],[1102,473],[1105,487],[1115,492],[1130,498],[1140,490],[1155,487],[1157,450],[1159,413],[1161,397],[1164,383],[1168,372],[1183,367],[1195,357],[1203,373],[1213,368],[1225,365],[1232,350],[1237,350],[1240,368],[1248,383],[1250,403],[1257,403],[1265,395],[1277,395],[1287,397],[1293,382],[1303,385],[1313,390],[1329,383],[1333,367],[1336,353],[1342,360],[1351,355],[1369,355],[1374,368],[1390,377],[1398,367],[1408,365],[1421,370],[1425,353],[1437,347],[1443,332],[1459,333],[1466,307],[1474,303],[1479,323],[1490,323],[1495,303],[1513,307],[1526,303],[1546,298],[1559,293],[1564,273],[1569,265],[1578,272],[1584,253],[1595,253],[1598,277],[1611,273],[1618,287],[1625,297],[1640,285],[1647,300],[1662,303],[1676,297],[1689,277],[1694,287],[1701,303],[1712,313],[1723,305],[1736,310],[1741,333],[1748,363],[1754,370],[1757,357],[1770,348],[1785,337],[1792,353],[1806,347],[1817,347],[1832,358],[1836,367],[1839,323],[1850,347],[1859,347],[1863,362],[1866,370]];
  var tallBars = [[796,129,285],[798,187,242],[800,232,260],[1157,462,490],[1159,407,467],[1161,397,417],[1101,453,490],[1195,338,377],[963,356,390],[875,400,425],[1836,343,392],[1841,302,353],[1702,292,320],[1752,337,377],[1866,340,385],[829,327,400],[571,405,440],[662,328,350]];
  var seed = 12345;
  function rnd() { seed = (seed * 16807) % 2147483647; return seed / 2147483647; }
  function priceAt(x) {
    for (var i = 1; i < path.length; i++) {
      if (x <= path[i][0]) {
        var a = path[i - 1], b = path[i];
        return a[1] + (b[1] - a[1]) * (x - a[0]) / (b[0] - a[0]);
      }
    }
    return path[path.length - 1][1];
  }

  var out = [];
  var GRID = '#778899';
  // grid
  for (var y = 135; y <= 531; y += 33) out.push('<path d="M312 ' + (y + .5) + 'H1867" stroke="' + GRID + '" stroke-dasharray="4 3"/>');
  for (var gx = 344; gx < 1867; gx += 32) out.push('<path d="M' + (gx + .5) + ' 109V533" stroke="' + GRID + '" stroke-dasharray="4 3"/>');
  out.push('<path d="M312 377.500H1867" stroke="#8d9bab"/>');

  // indicator blocks
  var blocks = [[1039,377,7,4],[1071,409,7,8],[1071,406,7,1],[1081,408,7,3],[1095,403,7,4],[1097,401,7,1],[1113,423,7,2],[1117,420,8,1],[1135,420,7,3],[1149,419,7,2],[1171,442,7,4],[1211,439,7,1],[1123,460,7,1],[1277,464,7,7],[1287,463,7,1],[1289,464,7,3],[1303,315,7,3],[1309,326,7,1],[1043,522,7,3],[1043,526,7,3],[1071,502,7,1],[1135,518,7,1],[1149,515,7,1],[1135,533,7,1],[1287,376,7,1],[1377,297,7,3],[1397,298,7,1],[1495,371,8,5],[1503,374,7,2],[1533,366,8,2],[1685,348,7,1],[1693,358,7,1],[1693,360,7,8],[1729,370,7,7],[1397,389,7,1],[1853,313,7,1],[1853,410,7,1],[1685,274,7,1]];
  blocks.forEach(function (b) { out.push('<rect x="' + b[0] + '" y="' + b[1] + '" width="' + b[2] + '" height="' + b[3] + '" fill="#0000ff"/>'); });

  // trade markers
  var marks = [['L',944,382],['L',964,373],['L',966,385],['L',984,376],['L',992,374],['R',1039,448],['R',1044,455],['L',1056,459],['R',1054,465],['R',1072,483],['R',1077,484],['R',1082,479],['R',1096,475],['L',1104,472],['R',1113,491],['R',1119,489],['R',1124,493],['R',1131,499],['R',1136,491],['R',1150,488],['R',1171,374],['L',1174,372],['L',1182,377],['L',1194,372],['R',1212,371],['R',1278,396],['R',1289,396],['R',1304,385],['L',1316,391],['L',1351,356],['R',1377,368],['R',1382,371],['R',1496,303],['R',1504,306],['L',1522,313],['R',1534,298],['R',1694,280],['R',1694,288],['R',1730,303]];
  marks.forEach(function (m) { out.push('<circle cx="' + m[1] + '" cy="' + m[2] + '" r="10" fill="#7f94a6"/>'); });
  marks.forEach(function (m) { out.push('<circle cx="' + m[1] + '" cy="' + m[2] + '" r="9" fill="#8a7c6c"/>'); });

  // bars
  var d = '';
  for (var x = 312; x < 1867; x += 2) {
    var c = priceAt(x) + (rnd() - .5) * 5, hi = c - 2 - rnd() * 6, lo = c + 2 + rnd() * 6;
    if (rnd() > .93) lo += 5;
    d += 'M' + (x + .5) + ' ' + Math.round(hi) + 'V' + Math.round(lo);
  }
  tallBars.forEach(function (b) { d += 'M' + (b[0] + .5) + ' ' + b[1] + 'V' + b[2]; });
  out.push('<path d="' + d + '" stroke="#00ff00" fill="none"/>');

  marks.forEach(function (m) {
    if (m[0] === 'R') {
      out.push('<path transform="translate(' + m[1] + ' ' + m[2] + ')" d="M-5-2h3v-3.500L4 0l-6 5.500V2h-3z" fill="#0000ff" stroke="#fff"/>');
    } else {
      out.push('<path transform="translate(' + m[1] + ' ' + m[2] + ')" d="M3-6.500V6.500L-5 0z" fill="#ff0000" stroke="#fff"/>');
    }
  });

  // frame, axis and labels
  out.push('<path d="M312 109H1867M312.500 109V533M312 533.500H1867" stroke="#fff" fill="none"/>');
  var labels = ['17 Nov 2023','20 Nov 15:01','22 Nov 01:01','23 Nov 10:01','27 Nov 02:01','28 Nov 11:01','29 Nov 20:01','1 Dec 06:01','4 Dec 15:01','6 Dec 01:01','7 Dec 10:01','8 Dec 19:01','12 Dec 05:01','13 Dec 14:01','14 Dec 23:01','18 Dec 09:01','19 Dec 18:01','21 Dec 04:01','22 Dec 13:01','26 Dec 22:01','28 Dec 08:01','29 Dec 17:01','3 Jan 03:01','4 Jan 12:01','5 Jan 22:01'];
  labels.forEach(function (t, i) {
    var lx = 312 + i * 64;
    out.push('<path d="M' + (lx + .5) + ' 533V538" stroke="#fff"/>');
    out.push('<text x="' + (lx - 1) + '" y="547" fill="#fff">' + t + '</text>');
  });
  out.push('<path d="M315 115h8l-4 4.500z" fill="#fff"/>');
  out.push('<text x="327" y="121" fill="#fff" textLength="201" xml:space="preserve">XAUUSD,H1  2035.73 2036.01 2026.90 2030.49</text>');
  out.push('<text x="1779" y="122" fill="#d4dee8" textLength="73">qiyuan1206_2023</text>');
  out.push('<circle cx="1861" cy="118" r="5" fill="none" stroke="#d4dee8"/><path d="M1858.500 119.500q2.500 2.500 5 0M1859 116h1M1862 116h1" stroke="#d4dee8" fill="none"/>');
  document.getElementById('chart').innerHTML = out.join('');
</script>
</body>
</html>
